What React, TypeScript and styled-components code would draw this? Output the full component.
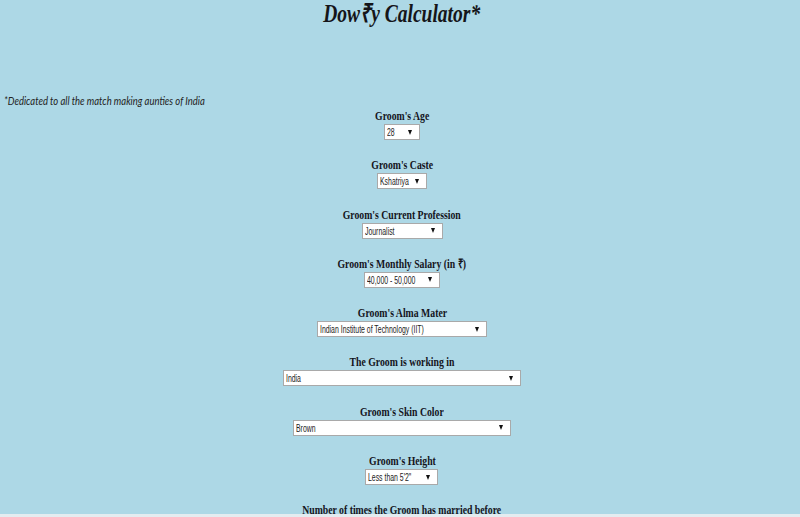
import React from "react";
import styled, { createGlobalStyle } from "styled-components";

// the screenshot is squeezed sideways, so text is narrowed with scaleX
const SQUEEZE = 0.75;

const GlobalStyle = createGlobalStyle`
  html, body {
    margin: 0;
    padding: 0;
    background: #add8e6;
    overflow: hidden;
  }
`;

interface Field {
  label: string;
  value: string;
  width: number;
}

const fields: Field[] = [
  { label: "Groom's Age", value: "28", width: 36 },
  { label: "Groom's Caste", value: "Kshatriya", width: 50 },
  { label: "Groom's Current Profession", value: "Journalist", width: 81 },
  { label: "Groom's Monthly Salary (in ₹)", value: "40,000 - 50,000", width: 76 },
  { label: "Groom's Alma Mater", value: "Indian Institute of Technology (IIT)", width: 170 },
  { label: "The Groom is working in", value: "India", width: 238 },
  { label: "Groom's Skin Color", value: "Brown", width: 218 },
  { label: "Groom's Height", value: "Less than 5'2\"", width: 73 },
];

const App: React.FC = () => {
  return (
    <>
      <GlobalStyle />
      <Page>
        <Title>
          <Squeezed>Dow₹y Calculator*</Squeezed>
        </Title>

        <Note>
          <NoteText>*Dedicated to all the match making aunties of India</NoteText>
        </Note>

        <Form>
          {fields.map((f) => (
            <Group key={f.label}>
              <Label>
                <Squeezed>{f.label}</Squeezed>
              </Label>
              <SelectBox $width={f.width}>
                <ValueArea>
                  <SelectValue>{f.value}</SelectValue>
                </ValueArea>
                <Caret />
              </SelectBox>
            </Group>
          ))}
          <Group>
            <Label>
              <Squeezed>Number of times the Groom has married before</Squeezed>
            </Label>
          </Group>
        </Form>
      </Page>
      <BottomEdge />
    </>
  );
};

export default App;

const Page = styled.div`
  width: 800px;
  height: 517px;
  display: flex;
  flex-direction: column;
`;

const Squeezed = styled.span`
  display: inline-block;
  white-space: nowrap;
  transform: scaleX(${SQUEEZE});
  transform-origin: center;
`;

const Title = styled.h1`
  margin: 0;
  padding-left: 4px;
  height: 28px;
  line-height: 28px;
  text-align: center;
  font-family: "Liberation Serif", "Times New Roman", serif;
  font-style: italic;
  font-weight: 700;
  font-size: 26px;
  color: #151519;
`;

const Note = styled.div`
  margin-top: 65px;
  height: 14px;
  line-height: 14px;
  padding-left: 4px;
`;

const NoteText = styled.span`
  display: inline-block;
  white-space: nowrap;
  font-family: Lato, "Open Sans", sans-serif;
  font-style: italic;
  font-size: 11px;
  color: #222;
  transform: scaleX(0.86);
  transform-origin: left center;
`;

const Form = styled.div`
  margin-top: 1px;
  padding-left: 4px;
  display: flex;
  flex-direction: column;
  align-items: center;
  gap: 17.3px;
`;

const Group = styled.div`
  display: flex;
  flex-direction: column;
  align-items: center;
`;

const Label = styled.div`
  height: 16px;
  line-height: 15px;
  font-family: "Liberation Serif", "Times New Roman", serif;
  font-weight: 700;
  font-size: 13px;
  color: #14141c;
`;

const SelectBox = styled.div<{ $width: number }>`
  box-sizing: border-box;
  width: ${({ $width }) => $width}px;
  height: 16px;
  display: flex;
  align-items: center;
  gap: 4px;
  padding: 0 7px 0 2px;
  background: #fff;
  border: 1px solid #a9a9a9;
`;

const ValueArea = styled.div`
  flex: 1;
  min-width: 0;
  overflow: hidden;
  display: flex;
  align-items: center;
`;

const SelectValue = styled.span`
  display: inline-block;
  white-space: nowrap;
  font-family: "Liberation Sans", Arial, sans-serif;
  font-size: 11.5px;
  color: #222;
  transform: scaleX(0.6);
  transform-origin: left center;
`;

const Caret = styled.span`
  flex: none;
  width: 0;
  height: 0;
  border-left: 2.5px solid transparent;
  border-right: 2.5px solid transparent;
  border-top: 5px solid #111;
`;

const BottomEdge = styled.div`
  position: fixed;
  left: 0;
  right: 0;
  bottom: 0;
  height: 3px;
  background: #e4ecf0;
`;
